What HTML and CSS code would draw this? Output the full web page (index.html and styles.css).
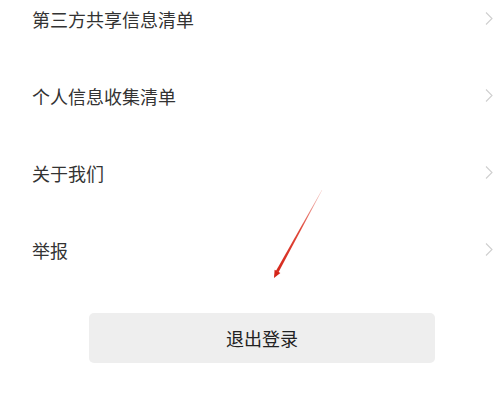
FILE: index.html
```html
<!DOCTYPE html>
<html lang="zh">
<head>
<meta charset="utf-8">
<link rel="stylesheet" href="styles.css">
</head>
<body>
<div class="page">
  <ul class="menu">
    <li class="row"><span class="label">第三方共享信息清单</span><svg class="chev" viewBox="0 0 8 13"><path d="M1 0.5 L7 6.5 L1 12.5" /></svg></li>
    <li class="row"><span class="label">个人信息收集清单</span><svg class="chev" viewBox="0 0 8 13"><path d="M1 0.5 L7 6.5 L1 12.5" /></svg></li>
    <li class="row"><span class="label">关于我们</span><svg class="chev" viewBox="0 0 8 13"><path d="M1 0.5 L7 6.5 L1 12.5" /></svg></li>
    <li class="row"><span class="label">举报</span><svg class="chev" viewBox="0 0 8 13"><path d="M1 0.5 L7 6.5 L1 12.5" /></svg></li>
  </ul>
  <div class="actions">
    <button class="logout">退出登录</button>
  </div>
  <svg class="annot" width="502" height="405" viewBox="0 0 502 405">
    <defs>
      <linearGradient id="g" x1="322" y1="210" x2="274" y2="298" gradientUnits="userSpaceOnUse">
        <stop offset="0" stop-color="#f3c6c2"/>
        <stop offset="0.45" stop-color="#e0483a"/>
        <stop offset="1" stop-color="#d42418"/>
      </linearGradient>
    </defs>
    <polygon points="322.2,210.1 321.8,209.9 275.9,290.9 278.5,292.3" fill="url(#g)"/>
    <polygon points="274,298 274.6,289.8 280.4,293.0" fill="#d42418"/>
  </svg>
</div>
</body>
</html>
```

FILE: styles.css
```css
html, body {
  margin: 0;
  padding: 0;
  background: #ffffff;
}
body {
  width: 502px;
  height: 405px;
  overflow: hidden;
  font-family: "Noto Sans CJK SC", "Noto Sans", sans-serif;
}
.page {
  position: relative;
  width: 502px;
  height: 405px;
}
.menu {
  list-style: none;
  margin: -20px 0 0 0;
  padding: 0;
}
.row {
  height: 77px;
  display: flex;
  align-items: center;
  justify-content: space-between;
  padding: 0 9px 0 32px;
}
.label {
  font-size: 18px;
  line-height: 1;
  color: #333333;
}
.chev {
  width: 8px;
  height: 13px;
  fill: none;
  stroke: #cfcfcf;
  stroke-width: 1.1;
}
.actions {
  padding: 25px 0 0 89px;
}
.logout {
  width: 346px;
  height: 50px;
  border: none;
  border-radius: 5px;
  background: #eeeeee;
  font-family: "Noto Sans CJK SC", "Noto Sans", sans-serif;
  font-size: 18px;
  color: #222222;
  padding: 0;
}
.annot {
  position: absolute;
  left: 0;
  top: 0;
  pointer-events: none;
}
```
